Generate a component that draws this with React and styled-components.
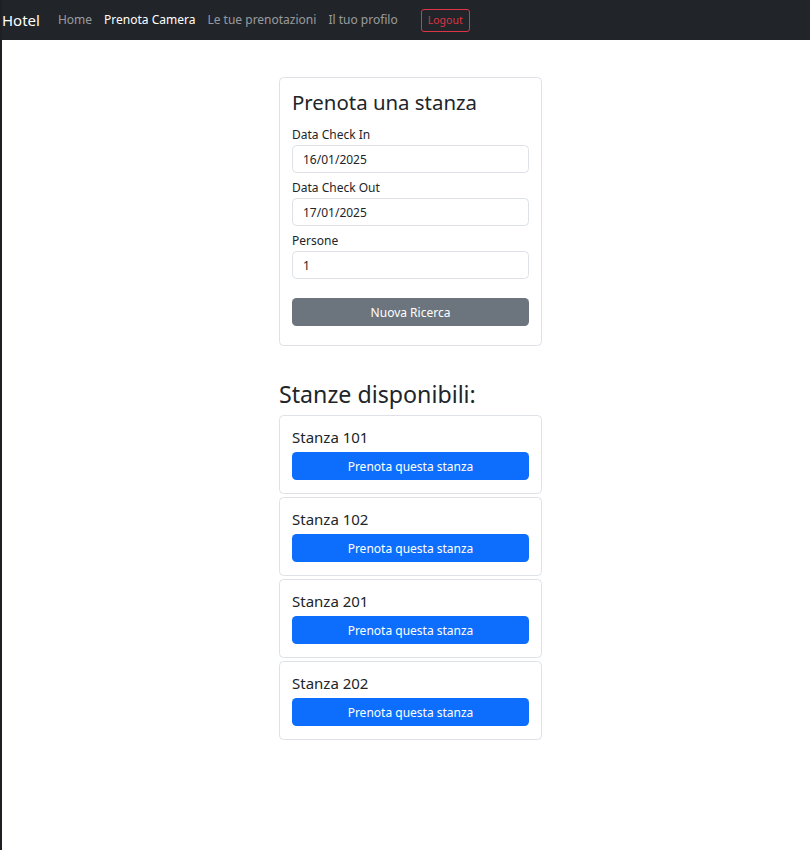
import React from "react";
import styled, { createGlobalStyle } from "styled-components";

const COLORS = {
  dark: "#212529",
  text: "#212529",
  border: "#dee2e6",
  muted: "rgba(255, 255, 255, 0.55)",
  danger: "#dc3545",
  secondary: "#6c757d",
  primary: "#0d6efd",
};

const GlobalStyle = createGlobalStyle`
  html, body {
    margin: 0;
    padding: 0;
    background: #fff;
  }
  body {
    font-family: "Noto Sans", "Open Sans", sans-serif;
    font-size: 12px;
    line-height: 1.5;
    color: ${COLORS.text};
    min-height: 850px;
    box-sizing: border-box;
    border-left: 2px solid #1e1f22;
  }
  * { box-sizing: border-box; }
`;

const Navbar = styled.nav`
  display: flex;
  align-items: center;
  height: 40px;
  margin-left: -2px;
  padding: 0 0 0 2px;
  background: ${COLORS.dark};
`;

const Brand = styled.a`
  font-size: 15px;
  color: #fff;
  margin-right: 12px;
  text-decoration: none;
`;

const NavList = styled.div`
  display: flex;
  align-items: center;
`;

const NavLink = styled.a`
  padding: 6px;
  font-size: 12px;
  color: ${(p) => (p.$active ? "#fff" : COLORS.muted)};
  text-decoration: none;
`;

const LogoutButton = styled.button`
  margin-left: 17px;
  height: 23px;
  padding: 0 6px;
  font-family: inherit;
  font-size: 10.5px;
  color: ${COLORS.danger};
  background: transparent;
  border: 1px solid ${COLORS.danger};
  border-radius: 3px;
`;

const Main = styled.main`
  display: flex;
  justify-content: center;
  padding: 37px 0 0 9px;
`;

const Column = styled.div`
  width: 263px;
  display: flex;
  flex-direction: column;
`;

const Card = styled.div`
  border: 1px solid ${COLORS.border};
  border-radius: 4.5px;
  padding: 12px 12px 13px;
  margin-bottom: ${(p) => p.$gap || 0}px;
`;

const Title = styled.h3`
  margin: 0 0 11px;
  font-size: 20.4px;
  font-weight: 400;
  line-height: 25px;
`;

const Field = styled.div`
  display: flex;
  flex-direction: column;
  margin-bottom: 6px;
`;

const Label = styled.label`
  line-height: 18px;
  margin-bottom: 1px;
`;

const Input = styled.input`
  height: 28px;
  padding: 0 10px;
  font-family: inherit;
  font-size: 12px;
  color: ${COLORS.text};
  border: 1px solid ${COLORS.border};
  border-radius: 4.5px;
  outline: none;
`;

const Button = styled.button`
  width: 100%;
  height: 28px;
  margin-top: ${(p) => p.$mt || 0}px;
  margin-bottom: ${(p) => p.$mb || 0}px;
  font-family: inherit;
  font-size: 12px;
  color: #fff;
  background: ${(p) => (p.$variant === "primary" ? COLORS.primary : COLORS.secondary)};
  border: none;
  border-radius: 4.5px;
`;

const SectionTitle = styled.h2`
  margin: 34px 0 6px;
  font-size: 23.2px;
  font-weight: 400;
  line-height: 29px;
`;

const RoomName = styled.h5`
  margin: 0 0 6px;
  font-size: 15px;
  font-weight: 400;
  line-height: 18px;
`;

const rooms = ["101", "102", "201", "202"];

export default function App() {
  return (
    <>
      <GlobalStyle />
      <Navbar>
        <Brand>Hotel</Brand>
        <NavList>
          <NavLink>Home</NavLink>
          <NavLink $active>Prenota Camera</NavLink>
          <NavLink>Le tue prenotazioni</NavLink>
          <NavLink>Il tuo profilo</NavLink>
          <LogoutButton>Logout</LogoutButton>
        </NavList>
      </Navbar>
      <Main>
        <Column>
          <Card>
            <Title>Prenota una stanza</Title>
            <Field>
              <Label>Data Check In</Label>
              <Input defaultValue="16/01/2025" />
            </Field>
            <Field>
              <Label>Data Check Out</Label>
              <Input defaultValue="17/01/2025" />
            </Field>
            <Field>
              <Label>Persone</Label>
              <Input defaultValue="1" />
            </Field>
            <Button $mt={13} $mb={6}>Nuova Ricerca</Button>
          </Card>
          <SectionTitle>Stanze disponibili:</SectionTitle>
          {rooms.map((r) => (
            <Card key={r} $gap={3}>
              <RoomName>Stanza {r}</RoomName>
              <Button $variant="primary">Prenota questa stanza</Button>
            </Card>
          ))}
        </Column>
      </Main>
    </>
  );
}
